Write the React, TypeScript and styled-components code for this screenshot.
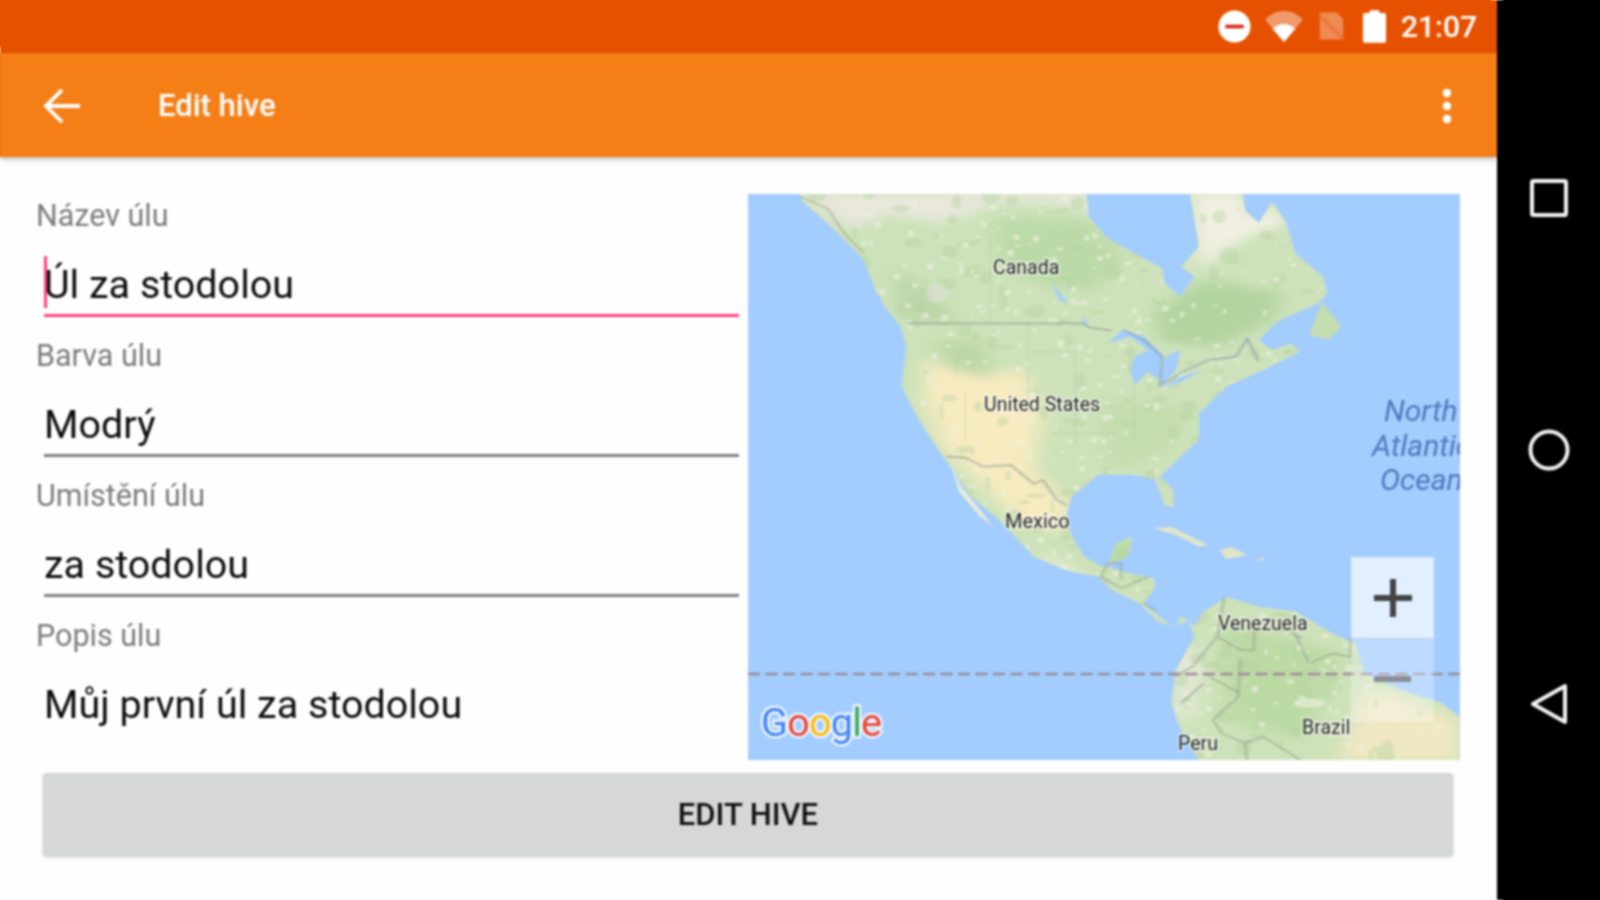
import React from "react";
import styled, { createGlobalStyle } from "styled-components";

const Global = createGlobalStyle`
  html, body { margin: 0; padding: 0; background: #fff; width: 1600px; height: 900px; overflow: hidden; }
  body { font-family: Roboto, "Noto Sans", sans-serif; }
`;

const Page = styled.div`
  display: flex;
  width: 1600px;
  height: 900px;
  background: #000;
  filter: blur(0.8px);
`;
const Screen = styled.div`
  width: 1497px;
  height: 900px;
  display: flex;
  flex-direction: column;
  background: #fefefe;
`;
const StatusBar = styled.div`
  height: 53px;
  flex: none;
  background: #e65100;
  display: flex;
  align-items: center;
  justify-content: flex-end;
  padding-right: 20px;
  box-shadow: -6px -6px 0 #e65100;
`;
const StatusIcon = styled.svg<{ $left: number }>`
  display: block;
  margin-right: ${(p) => p.$left}px;
`;
const Clock = styled.span`
  color: #fff;
  font-size: 30px;
  font-weight: 500;
  line-height: 55px;
`;
const Toolbar = styled.header`
  height: 104px;
  flex: none;
  background: #f57f17;
  display: flex;
  align-items: center;
  padding: 2px 45px 0 44px;
  box-sizing: border-box;
  box-shadow: 0 2px 5px rgba(0, 0, 0, 0.28), -6px 0 0 #f57f17;
  position: relative;
`;
const Title = styled.h1`
  margin: 0 0 0 78px;
  flex: 1;
  color: #fff;
  font-size: 31px;
  font-weight: 500;
  line-height: 40px;
`;
const Content = styled.main`
  display: flex;
  padding-top: 37px;
`;
const Form = styled.div`
  width: 703px;
  padding-left: 36px;
  margin-right: 9px;
  flex: none;
`;
const Field = styled.div`
  margin-bottom: 17px;
`;
const Label = styled.div`
  height: 42px;
  line-height: 44px;
  font-size: 30.5px;
  color: #7c7c7c;
`;
const Input = styled.div<{ $state: "focus" | "idle" | "none" }>`
  position: relative;
  margin-left: 8px;
  height: 54px;
  padding-top: 24px;
  font-size: 39.5px;
  line-height: 50px;
  color: #0c0c0c;
  border-bottom: 3px solid
    ${(p) => (p.$state === "focus" ? "#ff4081" : p.$state === "idle" ? "#808080" : "transparent")};
`;
const Caret = styled.span`
  position: absolute;
  left: 0;
  top: 20px;
  width: 3px;
  height: 52px;
  background: #ff4081;
`;
const MapBox = styled.div`
  position: relative;
  width: 712px;
  height: 566px;
  flex: none;
  background: #a3ccff;
  overflow: hidden;
`;
const MapSvg = styled.svg`
  display: block;
`;
const ZoomControl = styled.div`
  position: absolute;
  left: 603px;
  top: 363px;
  width: 83px;
  display: flex;
  flex-direction: column;
`;
const ZoomButton = styled.div<{ $top?: boolean }>`
  height: ${(p) => (p.$top ? 82 : 83)}px;
  background: ${(p) => (p.$top ? "rgba(255,255,255,.68)" : "rgba(255,255,255,.3)")};
  border-bottom: ${(p) => (p.$top ? "1px solid rgba(190,205,225,.9)" : "none")};
  display: flex;
  align-items: center;
  justify-content: center;
  padding-bottom: ${(p) => (p.$top ? 0 : 4)}px;
  box-sizing: border-box;
`;
const ActionButton = styled.button`
  display: block;
  margin: 13px 0 0 43px;
  width: 1410px;
  height: 83px;
  border: none;
  border-radius: 4px;
  background: #d6d7d7;
  box-shadow: 0 1px 3px rgba(0, 0, 0, 0.22);
  color: #111;
  font-family: Roboto, sans-serif;
  font-size: 31px;
  font-weight: 500;
  padding: 0;
`;
const NavBar = styled.nav`
  flex: 1;
  display: flex;
  flex-direction: column;
  align-items: center;
  justify-content: center;
  gap: 212px;
  padding-top: 4px;
  box-shadow: 6px 6px 0 #000, 6px -6px 0 #000;
`;

const LAND =
  "M130 38 L135 62 L190 130 L235 190 L270 240 L295 330 L315 380 L350 440 L362 500 L352 620 L392 725 L440 825 L470 880 L500 945 L560 1015 L610 1085 L640 1130 L720 1175 L780 1190 L810 1230 L870 1270 L910 1325 L950 1345 L960 1305 L990 1340 L1010 1295 L1060 1250 L1130 1280 L1210 1295 L1290 1360 L1340 1390 L1360 1480 L1440 1530 L1530 1570 L1568 1610 L1568 1745 L1000 1745 L960 1650 L940 1570 L950 1470 L990 1370 L975 1320 L945 1345 L905 1300 L880 1270 L905 1220 L900 1195 L850 1180 L800 1160 L820 1090 L855 1070 L845 1130 L790 1160 L750 1130 L720 1060 L712 1000 L722 950 L780 885 L860 885 L905 900 L925 975 L945 985 L945 930 L915 890 L960 830 L1000 780 L1000 700 L1030 660 L1060 620 L1140 570 L1220 515 L1200 490 L1160 510 L1130 480 L1170 425 L1260 370 L1280 340 L1270 290 L1210 220 L1190 130 L1160 65 L1130 130 L1100 90 L1095 38 L980 38 L1000 200 L960 260 L990 290 L960 350 L925 310 L920 265 L860 220 L800 175 L760 110 L755 38 Z";

const seeded = (n: number, seed: number, big: number) => {
  let s = seed;
  const r = () => {
    s = (s * 16807) % 2147483647;
    return s / 2147483647;
  };
  return Array.from({ length: n }, () => ({ x: 130 + r() * 1400, y: 38 + r() * 1700, a: 2 + r() * big, b: 2 + r() * big }));
};
const LIGHT = seeded(800, 1234, 6);
const DARK = seeded(420, 98765, 14);

const MapDrawing = () => (
  <MapSvg width="712" height="566" viewBox="748 194 712 566">
    <defs>
      <filter id="soft" x="-5%" y="-5%" width="110%" height="110%">
        <feGaussianBlur stdDeviation="22 16" />
      </filter>
      <filter id="softer" x="-5%" y="-5%" width="110%" height="110%">
        <feGaussianBlur stdDeviation="2.4 1.8" />
      </filter>
      <clipPath id="landClip">
        <path d={LAND} />
      </clipPath>
    </defs>
    <rect x="748" y="194" width="712" height="566" fill="#a3ccff" />
    <g transform="translate(740 180) scale(0.459 0.3333)">
      <path d={LAND} fill="#cde2ba" filter="url(#softer)" />
      <path d="M1240 465 L1268 365 L1310 440 L1282 480 Z" fill="#c4deb0" filter="url(#softer)" />
      <path d="M900 1045 L940 1040 L1020 1095 L1000 1100 L950 1065 Z" fill="#dfe7c8" filter="url(#softer)" />
      <path d="M1045 1110 L1070 1100 L1105 1125 L1060 1138 Z" fill="#e0e5c6" filter="url(#softer)" />
      <path d="M1120 1135 L1145 1135 L1140 1142 Z" fill="#dbe6c5" />
      <path d="M455 835 L482 920 L552 1040 L520 1005 L478 935 Z" fill="#eef0d2" filter="url(#softer)" />
      <g clipPath="url(#landClip)">
        <g filter="url(#soft)">
          <path d="M130 38 L760 38 L770 100 L680 70 L560 70 L440 130 L320 100 L240 150 Z" fill="#e9e8dc" />
          <path d="M985 38 L1095 38 L1110 120 L1160 70 L1190 130 L1090 180 L1000 270 Z" fill="#f3f0e2" />
          <path d="M400 530 L480 580 L620 570 L660 700 L640 860 L720 980 L700 1060 L610 1030 L500 880 L440 800 L400 660 Z" fill="#f7ebc0" />
          <path d="M900 400 L1010 300 L1180 340 L1160 420 L1040 500 L920 480 Z" fill="#b2d49f" />
          <path d="M560 110 L760 120 L840 240 L760 340 L620 300 L560 220 Z" fill="#bcdaa8" />
          <path d="M330 260 L420 340 L470 430 L360 420 Z" fill="#bad6a8" />
          <path d="M420 480 L530 480 L550 600 L450 560 Z" fill="#bcd8a6" />
          <path d="M780 660 L980 680 L940 820 L800 870 Z" fill="#c4ddb0" />
          <path d="M1050 1330 L1310 1420 L1230 1680 L1060 1620 Z" fill="#bcdaa4" />
          <path d="M1370 1520 L1568 1620 L1568 1745 L1300 1745 Z" fill="#efe8c2" />
          <path d="M950 1420 L1000 1400 L985 1600 L960 1650 Z" fill="#eeeae2" />
          <path d="M640 1110 L740 1180 L690 1190 Z" fill="#f0f0dc" />
          <path d="M825 1090 L855 1070 L850 1150 L800 1160 Z" fill="#a6d18c" />
        </g>
        <g fill="#b3d2a0" filter="url(#softer)" opacity="0.4">
          {DARK.map((d, i) => (
            <ellipse key={i} cx={d.x} cy={d.y} rx={d.a * 1.3} ry={d.b * 1.6} />
          ))}
        </g>
        <g fill="#f0f3e4" filter="url(#softer)" opacity="0.6">
          {LIGHT.map((d, i) => (
            <ellipse key={i} cx={d.x} cy={d.y} rx={d.a} ry={d.b * 1.4} />
          ))}
          <ellipse cx="430" cy="340" rx="24" ry="30" fill="#dfe0d8" />
          <ellipse cx="1240" cy="1570" rx="34" ry="14" />
        </g>
        <g fill="none" stroke="#a8b79c" strokeWidth="1.6" opacity="0.55">
          <path d="M545 130 V430 M628 430 V515 H730 V620 M628 515 V680 M490 640 V790 M730 620 V760 M680 760 H820 M860 620 V780" />
        </g>
      </g>
      <g fill="#a3ccff" filter="url(#softer)">
        <path d="M800 490 L835 450 L880 470 L920 525 L915 600 L888 575 L860 615 L850 570 L860 530 L890 510 L850 470 Z" />
        <path d="M925 530 L960 510 L950 570 L915 620 Z" />
        <path d="M915 625 L960 590 L1010 570 L960 605 Z" />
        <path d="M680 310 L715 370 L695 360 Z" />
        <path d="M750 410 L758 440 L745 430 Z" />
      </g>
      <g fill="none" stroke="#8d9488" strokeWidth="3" strokeLinejoin="round" filter="url(#softer)">
        <path d="M365 430 H745 L760 442 L810 452" />
        <path d="M130 50 L190 85 L230 165 L270 220" opacity="0.8" />
        <path d="M450 830 L490 833 L530 860 L590 855 L640 912 L660 900 L690 960 L712 975" />
        <path d="M835 450 L880 480 L920 530 L915 615 L965 575 L1020 540 L1080 530 L1105 475 L1130 545" stroke="#7d93a8" />
        <path d="M785 1195 L800 1150 L830 1150 L830 1200 M785 1190 L830 1225 L890 1190 M880 1270 L905 1290" opacity="0.8" />
        <path d="M1055 1250 L1040 1370 L985 1460 L950 1490 M1040 1370 L1090 1410 L1120 1410 L1120 1350 L1205 1350 L1240 1450 L1290 1420 L1330 1430 L1330 1370 M1200 1360 L1225 1375 M1090 1430 L1085 1550 L1030 1620 L1050 1660 L1100 1690 L1140 1670 L1220 1740 M1010 1480 L1090 1540 M960 1570 L1010 1510 M1100 1690 L1105 1745" opacity="0.85" />
      </g>
    </g>
    <line x1="748" y1="674" x2="1460" y2="674" stroke="#9a8a9a" strokeWidth="2.5" strokeDasharray="12 5.5" />
    <g fontFamily="Roboto, sans-serif" fontSize="19.5" fill="#222" stroke="#fff" strokeOpacity="0.6" strokeWidth="3" paintOrder="stroke">
      <text x="993" y="274">Canada</text>
      <text x="984" y="411">United States</text>
      <text x="1005" y="528" fontSize="20">Mexico</text>
      <text x="1218" y="630">Venezuela</text>
      <text x="1178" y="750">Peru</text>
      <text x="1302" y="734">Brazil</text>
    </g>
    <g fontFamily="Roboto, sans-serif" fontSize="30" fontStyle="italic" fill="#4f79bb">
      <text x="1384" y="421">North</text>
      <text x="1372" y="456">Atlantic</text>
      <text x="1380" y="490">Ocean</text>
    </g>
    <text x="761" y="736" fontFamily="Roboto, sans-serif" fontSize="39.5" stroke="#fff" strokeOpacity="0.75" strokeWidth="5" paintOrder="stroke" textLength="121">
      <tspan fill="#4285f4">G</tspan>
      <tspan fill="#ea4335">o</tspan>
      <tspan fill="#fbbc05">o</tspan>
      <tspan fill="#4285f4">g</tspan>
      <tspan fill="#34a853">l</tspan>
      <tspan fill="#ea4335">e</tspan>
    </text>
  </MapSvg>
);

const Bar = ({ state, label, value, caret }: { state: "focus" | "idle" | "none"; label: string; value: string; caret?: boolean }) => (
  <Field>
    <Label>{label}</Label>
    <Input $state={state}>
      {caret && <Caret />}
      {value}
    </Input>
  </Field>
);

export default function App() {
  return (
    <>
      <Global />
      <Page>
        <Screen>
          <StatusBar>
            <StatusIcon $left={14} width="33" height="33" viewBox="0 0 36 36">
              <circle cx="18" cy="18" r="17.5" fill="#fff" />
              <rect x="8" y="16" width="20" height="4" fill="#d5281b" />
            </StatusIcon>
            <StatusIcon $left={14} width="38" height="32" viewBox="0 0 40 34">
              <path d="M0 9 C12 -3 28 -3 40 9 L20 33 Z" fill="#fff" opacity="0.42" />
              <path d="M8 19 C15 12 25 12 32 19 L20 33 Z" fill="#fff" />
            </StatusIcon>
            <StatusIcon $left={18} width="28" height="31" viewBox="0 0 30 32">
              <path d="M3 1 H21 L28 8 V30 H3 Z" fill="#fff" opacity="0.33" />
              <path d="M0 1 L30 31" stroke="#e65100" strokeWidth="2.5" />
              <path d="M2 3 L29 30" stroke="#fff" strokeWidth="1.5" opacity="0.3" />
            </StatusIcon>
            <StatusIcon $left={15} width="23" height="33" viewBox="0 0 24 34">
              <path d="M7 0 H17 V3 H22 Q24 3 24 5 V32 Q24 34 22 34 H2 Q0 34 0 32 V5 Q0 3 2 3 H7 Z" fill="#fff" />
            </StatusIcon>
            <Clock>21:07</Clock>
          </StatusBar>
          <Toolbar>
            <svg width="36" height="34" viewBox="0 0 36 34" fill="none" stroke="#fff" strokeWidth="3.8">
              <path d="M36 17 H2" />
              <path d="M18 1 L2 17 L18 33" />
            </svg>
            <Title>Edit hive</Title>
            <svg width="10" height="36" viewBox="0 0 10 36" fill="#fff">
              <circle cx="5" cy="5" r="4.2" />
              <circle cx="5" cy="18" r="4.2" />
              <circle cx="5" cy="31" r="4.2" />
            </svg>
          </Toolbar>
          <Content>
            <Form>
              <Bar state="focus" label="Název úlu" value="Úl za stodolou" caret />
              <Bar state="idle" label="Barva úlu" value="Modrý" />
              <Bar state="idle" label="Umístění úlu" value="za stodolou" />
              <Bar state="none" label="Popis úlu" value="Můj první úl za stodolou" />
            </Form>
            <MapBox>
              <MapDrawing />
              <ZoomControl>
                <ZoomButton $top>
                  <svg width="38" height="38" viewBox="0 0 38 38" fill="#444">
                    <rect x="0" y="16" width="38" height="6" />
                    <rect x="16" y="0" width="6" height="38" />
                  </svg>
                </ZoomButton>
                <ZoomButton>
                  <svg width="37" height="6" viewBox="0 0 37 6" fill="#8a8f98">
                    <rect width="37" height="6" />
                  </svg>
                </ZoomButton>
              </ZoomControl>
            </MapBox>
          </Content>
          <ActionButton>EDIT HIVE</ActionButton>
        </Screen>
        <NavBar>
          <svg width="38" height="38" viewBox="0 0 38 38" fill="none" stroke="#f2f2f2" strokeWidth="4">
            <rect x="2" y="2" width="34" height="34" rx="1.5" />
          </svg>
          <svg width="42" height="42" viewBox="0 0 42 42" fill="none" stroke="#f2f2f2" strokeWidth="4">
            <circle cx="21" cy="21" r="18.5" />
          </svg>
          <svg width="38" height="42" viewBox="0 0 38 42" fill="none" stroke="#f2f2f2" strokeWidth="4" strokeLinejoin="round">
            <path d="M35 3 V39 L3 21 Z" />
          </svg>
        </NavBar>
      </Page>
    </>
  );
}
